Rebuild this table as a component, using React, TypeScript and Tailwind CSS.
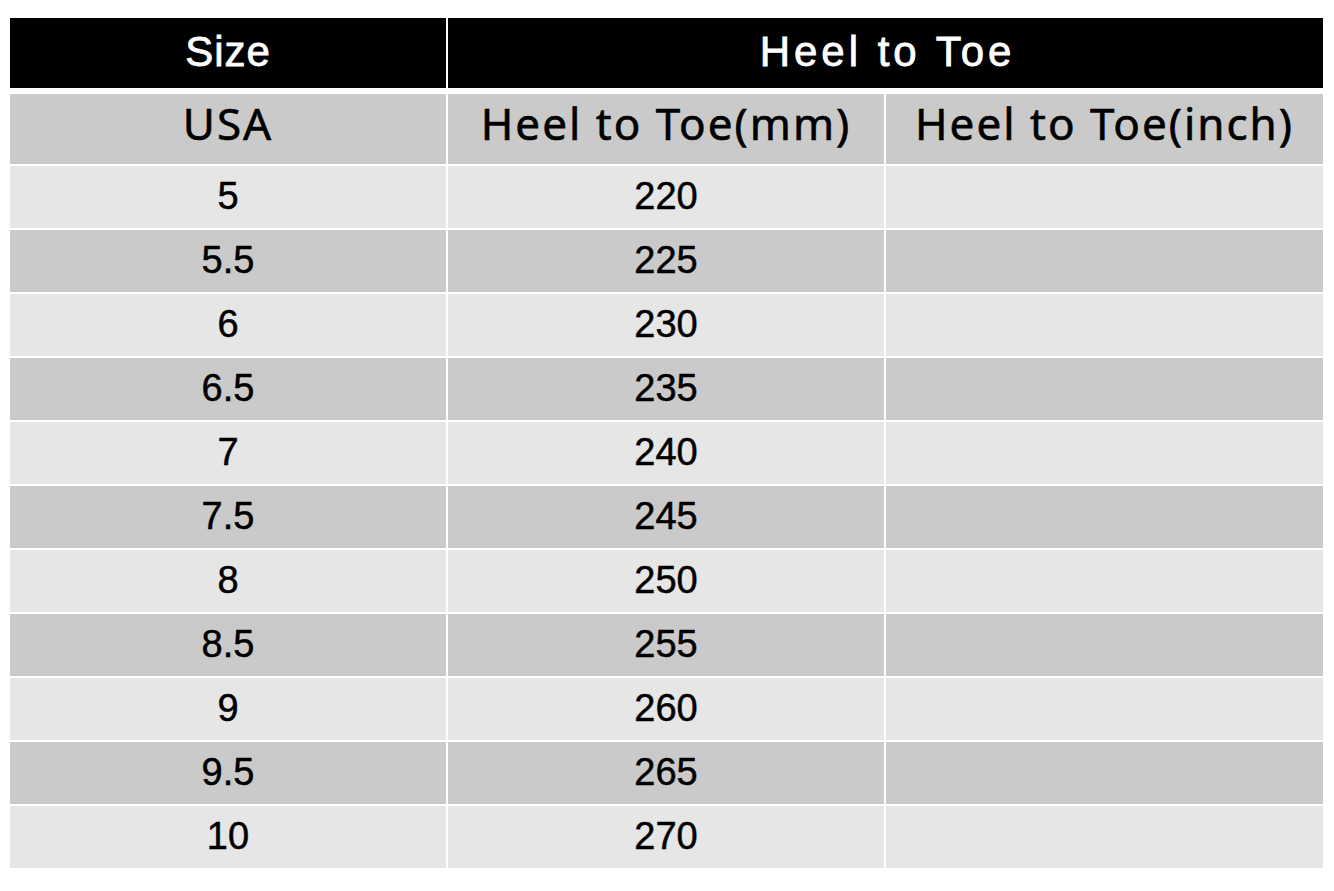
import React from "react";

const rows: [string, string][] = [
  ["5", "220"],
  ["5.5", "225"],
  ["6", "230"],
  ["6.5", "235"],
  ["7", "240"],
  ["7.5", "245"],
  ["8", "250"],
  ["8.5", "255"],
  ["9", "260"],
  ["9.5", "265"],
  ["10", "270"],
];

export default function App() {
  return (
    <div className="w-[1334px] h-[891px] bg-white pt-[18px] pl-[10px]">
      <div className="w-[1313px] flex flex-col">
        <div className="flex gap-[2px] h-[70px] text-white text-[42px] [font-family:'Liberation_Sans',Arial,sans-serif] [-webkit-text-stroke:0.8px_white]">
          <div className="w-[436px] bg-black flex items-center justify-center pb-[4px] tracking-[1px]">
            Size
          </div>
          <div className="flex-1 bg-black flex items-center justify-center pb-[4px] pl-[4px] tracking-[4px]">
            Heel to Toe
          </div>
        </div>
        <div className="flex gap-[2px] h-[70px] mt-[6px] text-black text-[44px] tracking-[2px] [font-family:'Noto_Sans','Open_Sans',sans-serif] [-webkit-text-stroke:0.6px_black]">
          <div className="w-[436px] bg-[#cacaca] flex items-center justify-center pb-[12px]">USA</div>
          <div className="w-[436px] bg-[#cacaca] flex items-center justify-center pb-[12px]">Heel to Toe(mm)</div>
          <div className="flex-1 bg-[#cacaca] flex items-center justify-center pb-[12px]">Heel to Toe(inch)</div>
        </div>
        {rows.map(([usa, mm], i) => {
          const bg = i % 2 === 0 ? "bg-[#e6e6e6]" : "bg-[#cacaca]";
          return (
            <div
              key={usa}
              className="flex gap-[2px] h-[62px] mt-[2px] text-black text-[38px] [font-family:'Liberation_Sans',Arial,sans-serif] [-webkit-text-stroke:0.5px_black]"
            >
              <div className={`w-[436px] ${bg} flex items-center justify-center pb-[2px]`}>{usa}</div>
              <div className={`w-[436px] ${bg} flex items-center justify-center pb-[2px]`}>{mm}</div>
              <div className={`flex-1 ${bg}`}></div>
            </div>
          );
        })}
      </div>
    </div>
  );
}
